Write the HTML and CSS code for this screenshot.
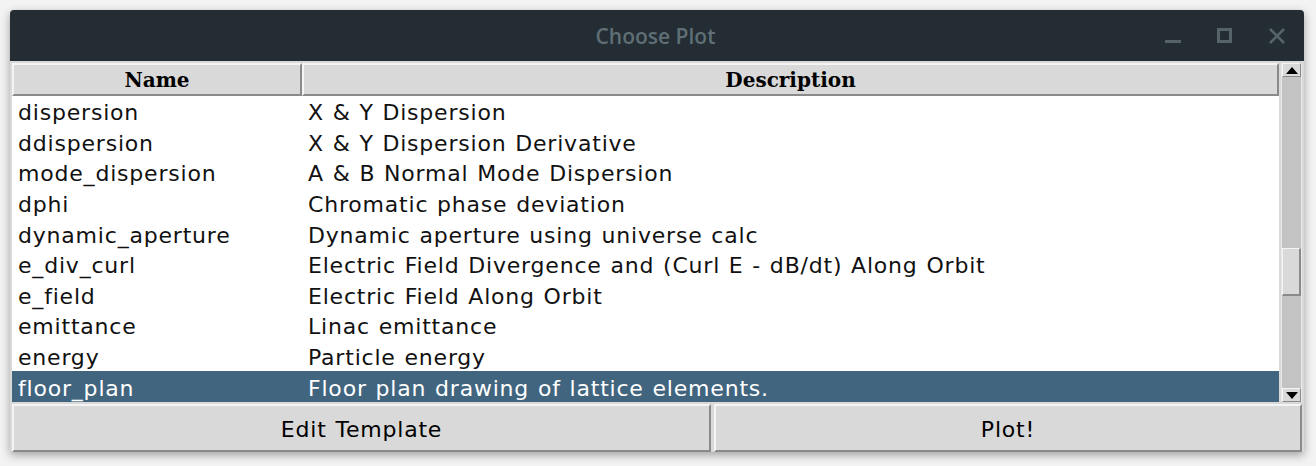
FILE: index.html
```html
<!DOCTYPE html>
<html>
<head>
<meta charset="utf-8">
<link rel="stylesheet" href="styles.css">
</head>
<body>
<div class="window">
  <div class="titlebar">
    <span class="title">Choose Plot</span>
    <div class="controls">
      <svg class="ctl" width="16" height="16" viewBox="0 0 16 16"><rect x="0" y="12" width="16" height="3" fill="#56646a"/></svg>
      <svg class="ctl" width="16" height="16" viewBox="0 0 16 16"><rect x="1.5" y="1.5" width="12" height="12" fill="none" stroke="#56646a" stroke-width="3"/></svg>
      <svg class="ctl" width="16" height="16" viewBox="0 0 16 16"><path d="M1 1 L15 15 M15 1 L1 15" stroke="#56646a" stroke-width="2.6"/></svg>
    </div>
  </div>
  <div class="content">
    <div class="listarea">
      <div class="table">
        <div class="header">
          <div class="hcell name">Name</div>
          <div class="hcell desc">Description</div>
        </div>
        <div class="rows">
          <div class="row"><span class="c1">dispersion</span><span class="c2">X &amp; Y Dispersion</span></div>
          <div class="row"><span class="c1">ddispersion</span><span class="c2">X &amp; Y Dispersion Derivative</span></div>
          <div class="row"><span class="c1">mode_dispersion</span><span class="c2">A &amp; B Normal Mode Dispersion</span></div>
          <div class="row"><span class="c1">dphi</span><span class="c2">Chromatic phase deviation</span></div>
          <div class="row"><span class="c1">dynamic_aperture</span><span class="c2">Dynamic aperture using universe calc</span></div>
          <div class="row"><span class="c1">e_div_curl</span><span class="c2">Electric Field Divergence and (Curl E - dB/dt) Along Orbit</span></div>
          <div class="row"><span class="c1">e_field</span><span class="c2">Electric Field Along Orbit</span></div>
          <div class="row"><span class="c1">emittance</span><span class="c2">Linac emittance</span></div>
          <div class="row"><span class="c1">energy</span><span class="c2">Particle energy</span></div>
          <div class="row selected"><span class="c1">floor_plan</span><span class="c2">Floor plan drawing of lattice elements.</span></div>
        </div>
      </div>
      <div class="scrollbar">
        <div class="arrow up"><svg width="12" height="7" viewBox="0 0 12 7"><path d="M6 0 L12 7 L0 7 Z" fill="#000"/></svg></div>
        <div class="trough">
          <div class="thumb"></div>
        </div>
        <div class="arrow down"><svg width="12" height="7" viewBox="0 0 12 7"><path d="M0 0 L12 0 L6 7 Z" fill="#000"/></svg></div>
      </div>
    </div>
    <div class="buttons">
      <button class="btn edit">Edit Template</button>
      <button class="btn plot">Plot!</button>
    </div>
  </div>
</div>
</body>
</html>
```

FILE: styles.css
```css
html, body {
  margin: 0;
  padding: 0;
  background: #f3f3f3;
}
body {
  padding: 10px 0 0 10px;
  width: 1316px;
  height: 466px;
  box-sizing: border-box;
  overflow: hidden;
}
.window {
  width: 1294px;
  height: 442px;
  display: flex;
  flex-direction: column;
  background: #d9d9d9;
  border-radius: 4px 4px 0 0;
  box-shadow: 0 3px 10px rgba(0,0,0,0.35);
  overflow: hidden;
}
.titlebar {
  height: 51px;
  background: #232d33;
  position: relative;
  display: flex;
  align-items: center;
  justify-content: center;
  flex: none;
}
.title {
  font-family: "Open Sans", sans-serif;
  font-size: 21px;
  font-weight: 600;
  color: #5f6f75;
  margin-right: 3px;
}
.controls {
  position: absolute;
  right: 19px;
  top: 18px;
  display: flex;
  gap: 36px;
}
.ctl { display: block; }
.content {
  flex: 1;
  display: flex;
  flex-direction: column;
  padding: 2px 2px 0 2px;
  gap: 2px;
}
.listarea {
  height: 339px;
  display: flex;
  gap: 2px;
}
.table {
  flex: 1;
  background: #fff;
  display: flex;
  flex-direction: column;
  overflow: hidden;
}
.header {
  height: 33px;
  display: flex;
  flex: none;
  background: #d9d9d9;
}
.hcell {
  box-sizing: border-box;
  border-top: 2px solid #f4f4f4;
  border-left: 2px solid #f4f4f4;
  border-bottom: 2px solid #8a8a8a;
  border-right: 2px solid #8a8a8a;
  display: flex;
  align-items: center;
  justify-content: center;
  font-family: "DejaVu Serif", serif;
  font-weight: bold;
  font-size: 20px;
  color: #000;
  padding-top: 1px;
}
.hcell.name { width: 290px; }
.hcell.desc { flex: 1; }
.rows {
  flex: 1;
  display: flex;
  flex-direction: column;
}
.row {
  height: 30.6px;
  box-sizing: border-box;
  padding-top: 3px;
  display: flex;
  align-items: center;
  font-family: "DejaVu Sans", sans-serif;
  font-size: 22px;
  letter-spacing: 0.8px;
  word-spacing: 1px;
  color: #111;
  white-space: nowrap;
}
.row .c1 {
  width: 290px;
  padding-left: 6px;
  box-sizing: border-box;
}
.row .c2 {
  padding-left: 6px;
}
.row.selected {
  background: #41657f;
  color: #fff;
}
.scrollbar {
  width: 21px;
  background: #c3c3c3;
  display: flex;
  flex-direction: column;
  border-left: 1px solid #e8e8e8;
  border-right: 1px solid #e8e8e8;
  box-sizing: border-box;
}
.arrow {
  height: 14px;
  box-sizing: border-box;
  background: #d9d9d9;
  border-top: 1px solid #f4f4f4;
  border-left: 1px solid #f4f4f4;
  border-bottom: 1px solid #8a8a8a;
  border-right: 1px solid #8a8a8a;
  display: flex;
  align-items: center;
  justify-content: center;
  flex: none;
}
.trough {
  flex: 1;
  display: flex;
  flex-direction: column;
  padding-top: 171px;
}
.thumb {
  height: 48px;
  box-sizing: border-box;
  background: #d9d9d9;
  border-top: 1px solid #f4f4f4;
  border-left: 1px solid #f4f4f4;
  border-bottom: 2px solid #8a8a8a;
  border-right: 2px solid #8a8a8a;
}
.buttons {
  display: flex;
  gap: 3px;
  height: 48px;
}
.btn {
  margin: 0;
  box-sizing: border-box;
  background: #d9d9d9;
  border-top: 2px solid #f4f4f4;
  border-left: 2px solid #f4f4f4;
  border-bottom: 2px solid #8a8a8a;
  border-right: 2px solid #8a8a8a;
  font-family: "DejaVu Sans", sans-serif;
  font-size: 22px;
  letter-spacing: 0.8px;
  word-spacing: 1px;
  color: #000;
  padding: 2px 0 0 0;
}
.btn.edit { width: 699px; }
.btn.plot { flex: 1; }
```
